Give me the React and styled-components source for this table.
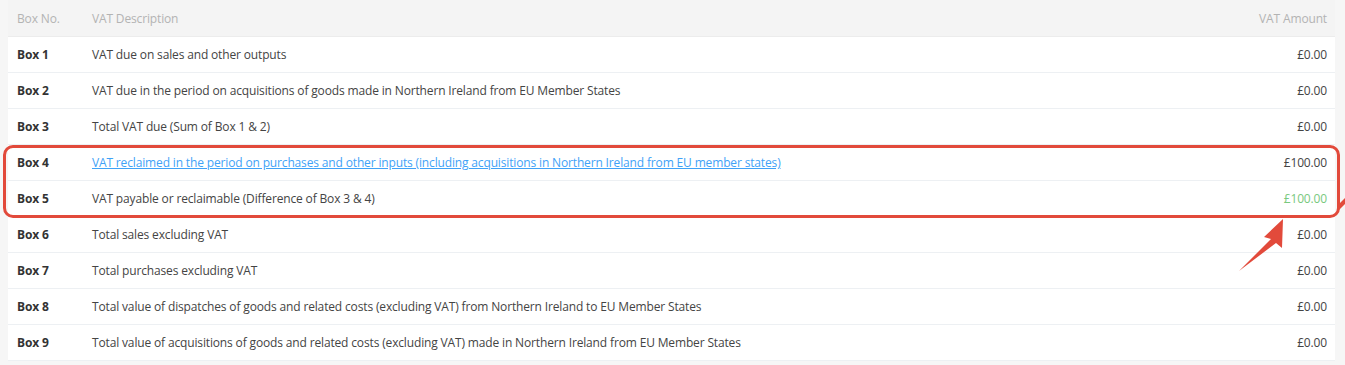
import React from "react";
import styled, { createGlobalStyle } from "styled-components";

const GlobalStyle = createGlobalStyle`
  html, body {
    margin: 0;
    padding: 0;
    background: #f6f6f6;
  }
  body {
    font-family: "Open Sans", "Liberation Sans", sans-serif;
  }
`;

const Page = styled.div`
  position: relative;
  width: 1345px;
  height: 365px;
  padding: 0 10px 0 8px;
  box-sizing: border-box;
`;

const Table = styled.div`
  background: #fff;
`;

const Row = styled.div`
  display: grid;
  grid-template-columns: 75px 1fr auto;
  align-items: center;
  height: ${(p) => (p.$head ? "36px" : "35px")};
  padding: 0 8px 0 9px;
  background: ${(p) => (p.$head ? "#f4f4f4" : "#fff")};
  border-bottom: 1px solid ${(p) => (p.$head ? "#ececec" : "#edf0f3")};
  font-size: 12px;
  letter-spacing: -0.15px;
  color: #444;
`;

const HeadCell = styled.div`
  color: #b3b3b3;
  text-align: ${(p) => (p.$right ? "right" : "left")};
`;

const BoxLabel = styled.div`
  font-weight: 700;
  color: #333;
`;

const Desc = styled.div`
  color: #444;
`;

const DescLink = styled.a`
  color: #3fa2f7;
  text-decoration: underline;
  cursor: pointer;
`;

const Amount = styled.div`
  text-align: right;
  color: ${(p) => (p.$green ? "#79c97e" : "#444")};
`;

const Highlight = styled.div`
  position: absolute;
  left: 3px;
  top: 145px;
  width: 1337px;
  height: 73px;
  border: 3px solid #e24a3b;
  border-radius: 10px;
  box-sizing: border-box;
  pointer-events: none;
`;

const Arrow = styled.svg`
  position: absolute;
  left: 1230px;
  top: 190px;
  pointer-events: none;
`;

const rows = [
  { no: "Box 1", desc: "VAT due on sales and other outputs", amount: "£0.00" },
  { no: "Box 2", desc: "VAT due in the period on acquisitions of goods made in Northern Ireland from EU Member States", amount: "£0.00" },
  { no: "Box 3", desc: "Total VAT due (Sum of Box 1 & 2)", amount: "£0.00" },
  { no: "Box 4", desc: "VAT reclaimed in the period on purchases and other inputs (including acquisitions in Northern Ireland from EU member states)", amount: "£100.00", link: true },
  { no: "Box 5", desc: "VAT payable or reclaimable (Difference of Box 3 & 4)", amount: "£100.00", green: true },
  { no: "Box 6", desc: "Total sales excluding VAT", amount: "£0.00" },
  { no: "Box 7", desc: "Total purchases excluding VAT", amount: "£0.00" },
  { no: "Box 8", desc: "Total value of dispatches of goods and related costs (excluding VAT) from Northern Ireland to EU Member States", amount: "£0.00" },
  { no: "Box 9", desc: "Total value of acquisitions of goods and related costs (excluding VAT) made in Northern Ireland from EU Member States", amount: "£0.00" },
];

export default function App() {
  return (
    <>
      <GlobalStyle />
      <Page>
        <Table>
          <Row $head>
            <HeadCell>Box No.</HeadCell>
            <HeadCell>VAT Description</HeadCell>
            <HeadCell $right>VAT Amount</HeadCell>
          </Row>
          {rows.map((r) => (
            <Row key={r.no}>
              <BoxLabel>{r.no}</BoxLabel>
              <Desc>{r.link ? <DescLink>{r.desc}</DescLink> : r.desc}</Desc>
              <Amount $green={r.green}>{r.amount}</Amount>
            </Row>
          ))}
        </Table>
        <Highlight />
        <Arrow width="115" height="85" viewBox="0 0 115 85">
          {/* callout arrow pointing up to the highlight box */}
          <polygon points="53,29 34,47 41,49 9,81 46,53 52,58" fill="#e24a3b" />
          <polygon points="107,16 115,8 115,14 109,20" fill="#e24a3b" />
        </Arrow>
      </Page>
    </>
  );
}
